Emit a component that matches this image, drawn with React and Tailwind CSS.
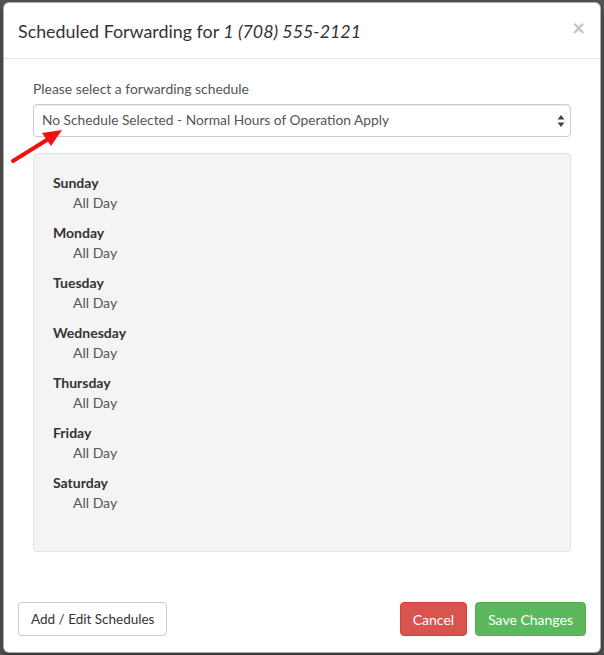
import React from "react";

const days = ["Sunday", "Monday", "Tuesday", "Wednesday", "Thursday", "Friday", "Saturday"];

export default function App() {
  return (
    <div
      className="relative w-[604px] h-[655px] bg-[#575757] pt-[2px] pl-[3px] overflow-hidden"
      style={{ fontFamily: "Lato, 'Open Sans', sans-serif" }}
    >
      <div className="w-[598px] h-[651px] bg-white rounded-[6px] border border-[#3a3a3a]/40 shadow-[0_3px_9px_rgba(0,0,0,0.5)] flex flex-col">
        {/* Header */}
        <div className="h-[56px] shrink-0 border-b border-[#e5e5e5] flex items-center justify-between pl-[14px] pr-[14px]">
          <h4 className="text-[17.85px] leading-[20px] text-[#333] pt-[1px]">
            Scheduled Forwarding for <em className="italic">1 (708) 555-2121</em>
          </h4>
          <button className="text-[#c4c4c4] text-[22px] leading-none font-bold -mt-[5px] pr-[1px]">×</button>
        </div>

        {/* Body */}
        <div className="flex-1 px-[29px] pt-[20px]">
          <label className="block text-[13.9px] leading-[20px] text-[#555] mb-[5px]">
            Please select a forwarding schedule
          </label>
          <div className="h-[33px] border border-[#ccc] rounded-[4px] flex items-center justify-between pl-[8px] pr-[5px] shadow-[inset_0_1px_1px_rgba(0,0,0,0.075)]">
            <span className="text-[13.75px] text-[#555]">No Schedule Selected - Normal Hours of Operation Apply</span>
            <svg width="8" height="14" viewBox="0 0 8 14">
              <path d="M4 1 L7.5 5.5 L0.5 5.5 Z" fill="#444" />
              <path d="M4 13 L7.5 8.5 L0.5 8.5 Z" fill="#444" />
            </svg>
          </div>
          <div className="mt-[16px] h-[399px] bg-[#f4f4f4] border border-[#e3e3e3] rounded-[4px] pt-[19px] px-[19px] flex flex-col gap-[10px]">
            {days.map((d) => (
              <div key={d}>
                <div className="text-[14px] leading-[20px] font-bold text-[#333]">{d}</div>
                <div className="text-[14px] leading-[20px] text-[#555] pl-[20px]">All Day</div>
              </div>
            ))}
          </div>
        </div>

        {/* Footer */}
        <div className="shrink-0 flex items-center justify-between px-[14px] pb-[16px]">
          <button className="h-[34px] px-[12px] border border-[#ccc] rounded-[4px] bg-white text-[13.5px] text-[#333]">
            Add / Edit Schedules
          </button>
          <div className="flex gap-[8px]">
            <button className="h-[34px] px-[12px] border border-[#d43f3a] rounded-[4px] bg-[#d9534f] text-[14px] text-white">
              Cancel
            </button>
            <button className="h-[34px] px-[12px] border border-[#4cae4c] rounded-[4px] bg-[#5cb85c] text-[14px] text-white">
              Save Changes
            </button>
          </div>
        </div>
      </div>

      {/* Red annotation arrow */}
      <svg className="absolute left-0 top-0 pointer-events-none" width="80" height="170" viewBox="0 0 80 170">
        <line x1="13" y1="161" x2="50" y2="138" stroke="#f01010" strokeWidth="4" strokeLinecap="round" />
        <path d="M62 130 L51 146 L42 133 Z" fill="#f01010" />
      </svg>
    </div>
  );
}
